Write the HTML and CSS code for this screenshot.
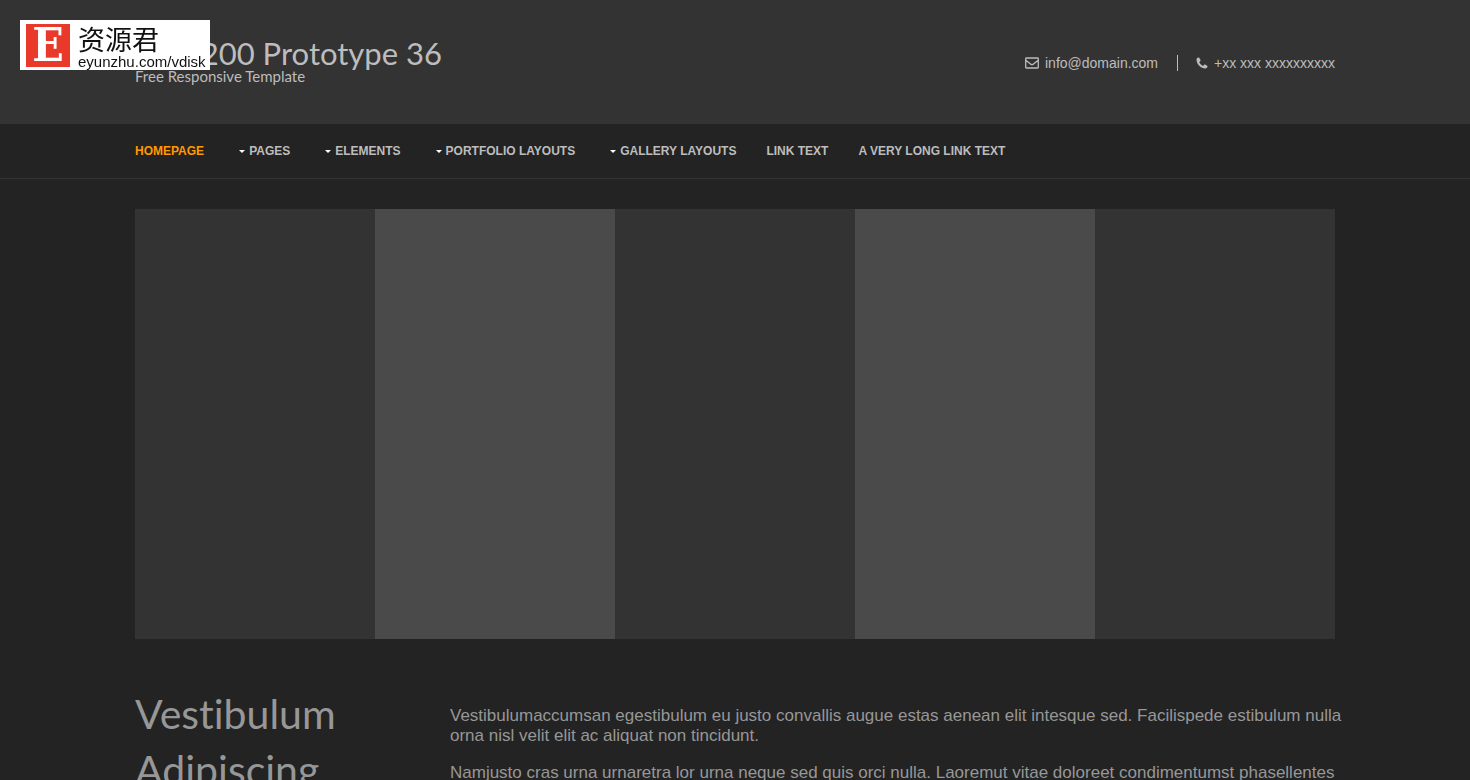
FILE: index.html
```html
<!DOCTYPE html>
<html lang="en">
<head>
<meta charset="utf-8">
<meta name="viewport" content="width=device-width, initial-scale=1">
<title>RS-1200 Prototype 36</title>
<link rel="stylesheet" href="styles.css">
</head>
<body>
<a class="badge" href="#">
  <span class="badge-mark">E</span>
  <span class="badge-text">
    <span class="badge-name" lang="zh">资源君</span>
    <span class="badge-url">eyunzhu.com/vdisk</span>
  </span>
</a>

<header class="header">
  <div class="wrap header-inner">
    <div class="brand">
      <h1 class="brand-title"><a href="#">RS-1200 Prototype 36</a></h1>
      <p class="brand-tag">Free Responsive Template</p>
    </div>
    <ul class="contact">
      <li class="contact-item">
        <svg class="icon-mail" viewBox="0 0 14 12" aria-hidden="true"><path d="M1.500 1h11a.8.8 0 0 1 .8.8v8.400a.8.8 0 0 1-.8.8h-11a.8.8 0 0 1-.8-.8V1.800a.8.8 0 0 1 .8-.8zM1 3.500l4.600 3.600q1.400 1 2.800 0L13 3.500"/></svg>
        <span>info@domain.com</span>
      </li>
      <li class="contact-item">
        <svg class="icon-phone" viewBox="0 0 12 12" aria-hidden="true"><path d="M.5 2.700C.5 1.500 1.300.9 2.500.5c.4-.1.600 0 .8.4l1.200 2.200c.2.400.1.600-.2.900l-.9.900c-.2.200-.2.400 0 .7.800 1.400 1.700 2.300 3.100 3.100.3.200.5.200.7 0l.9-1c.3-.3.500-.3.900-.1l2.100 1.200c.4.200.5.400.4.800-.3 1.200-1 1.900-2.200 1.900C5 11.500.5 7 .5 2.700z"/></svg>
        <span>+xx xxx xxxxxxxxxx</span>
      </li>
    </ul>
  </div>
</header>

<nav class="nav" aria-label="Main">
  <ul class="wrap nav-list">
    <li><a class="nav-link active" href="#">Homepage</a></li>
    <li><a class="nav-link drop" href="#">Pages</a></li>
    <li><a class="nav-link drop" href="#">Elements</a></li>
    <li><a class="nav-link drop" href="#">Portfolio Layouts</a></li>
    <li><a class="nav-link drop" href="#">Gallery Layouts</a></li>
    <li><a class="nav-link" href="#">Link Text</a></li>
    <li><a class="nav-link" href="#">A Very Long Link Text</a></li>
  </ul>
</nav>

<div class="wrap slider">
  <div class="panel"></div>
  <div class="panel"></div>
  <div class="panel"></div>
  <div class="panel"></div>
  <div class="panel"></div>
</div>

<main class="wrap intro">
  <h2 class="intro-title">Vestibulum Adipiscing</h2>
  <div class="intro-text">
    <p>Vestibulumaccumsan egestibulum eu justo convallis augue estas aenean elit intesque sed. Facilispede estibulum nulla orna nisl velit elit ac aliquat non tincidunt.</p>
    <p>Namjusto cras urna urnaretra lor urna neque sed quis orci nulla. Laoremut vitae doloreet condimentumst phasellentes</p>
  </div>
</main>
</body>
</html>
```
FILE: styles.css
```css
* { box-sizing: border-box; }

html, body {
  margin: 0;
  height: 100%;
  overflow: hidden;
}

body {
  background: #232323;
  color: #979797;
  font: 14px/20px "Liberation Sans", Arial, sans-serif;
}

h1, h2, p, ul { margin: 0; padding: 0; font-weight: 400; }
ul { list-style: none; }
a { color: inherit; text-decoration: none; }

.wrap {
  width: calc(100% - 40px);
  max-width: 1200px;
  margin: 0 auto;
}

/* Corner badge */
.badge {
  position: fixed;
  top: 20px;
  left: 20px;
  z-index: 2;
  display: flex;
  gap: 8px;
  padding: 4px 4px 3px 6px;
  width: 190px;
  height: 50px;
  background: #fff;
  color: #111;
  white-space: nowrap;
}

.badge-mark {
  width: 44px;
  height: 43px;
  background: #e8392b;
  color: #fff;
  font: bold 46px/43px "DejaVu Serif Condensed", "DejaVu Serif", serif;
  text-align: center;
}

.badge-text { display: flex; flex-direction: column; }

.badge-name {
  font: 400 27px/30px "Noto Sans CJK SC", sans-serif;
}

.badge-url {
  font: 15px/15px "Liberation Sans", Arial, sans-serif;
}

/* Header */
.header { background: #333; color: #bdbdbd; }

.header-inner {
  display: flex;
  justify-content: space-between;
  align-items: flex-start;
  padding: 39px 0 39px;
}

.brand { font-family: Lato, sans-serif; }
.brand-title { font-size: 31px; line-height: 28px; }
.brand-tag { font-size: 15px; line-height: 18px; }

.contact { display: flex; padding-top: 16px; }

.contact-item {
  display: flex;
  align-items: center;
  gap: 6px;
  line-height: 16px;
}

.contact-item + .contact-item {
  margin-left: 19px;
  padding-left: 18px;
  border-left: 1px solid #bdbdbd;
}

.icon-mail {
  width: 14px;
  height: 12px;
  fill: none;
  stroke: #bdbdbd;
  stroke-width: 1.3;
}

.icon-phone { width: 12px; height: 12px; fill: #bdbdbd; }

/* Navigation */
.nav { border-bottom: 1px solid #333; }

.nav-list { display: flex; gap: 30px; padding: 17px 0; }

.nav-link {
  display: flex;
  align-items: center;
  color: #bdbdbd;
  font-size: 12px;
  font-weight: 700;
  text-transform: uppercase;
  white-space: nowrap;
}

.nav-link.active { color: #f90; }

.drop::before {
  content: "";
  margin: 0 4px 0 5px;
  border: solid transparent;
  border-width: 3px 3px 0;
  border-top-color: #fff;
}

/* Slider */
.slider {
  display: grid;
  grid-template-columns: repeat(5, 1fr);
  margin-top: 30px;
}

.panel { height: 430px; background: #333; }
.panel:nth-child(even) { background: #4a4a4a; }

/* Intro */
.intro {
  display: grid;
  grid-template-columns: 285px 1fr;
  gap: 30px;
  padding-top: 47px;
}

.intro-title {
  font: 41px/56px Lato, sans-serif;
  font-variant-ligatures: none;
}

.intro-text {
  display: grid;
  gap: 17px;
  align-content: start;
  margin-right: -8px;
  padding-top: 20px;
  font-size: 17px;
  line-height: 20px;
}
```
